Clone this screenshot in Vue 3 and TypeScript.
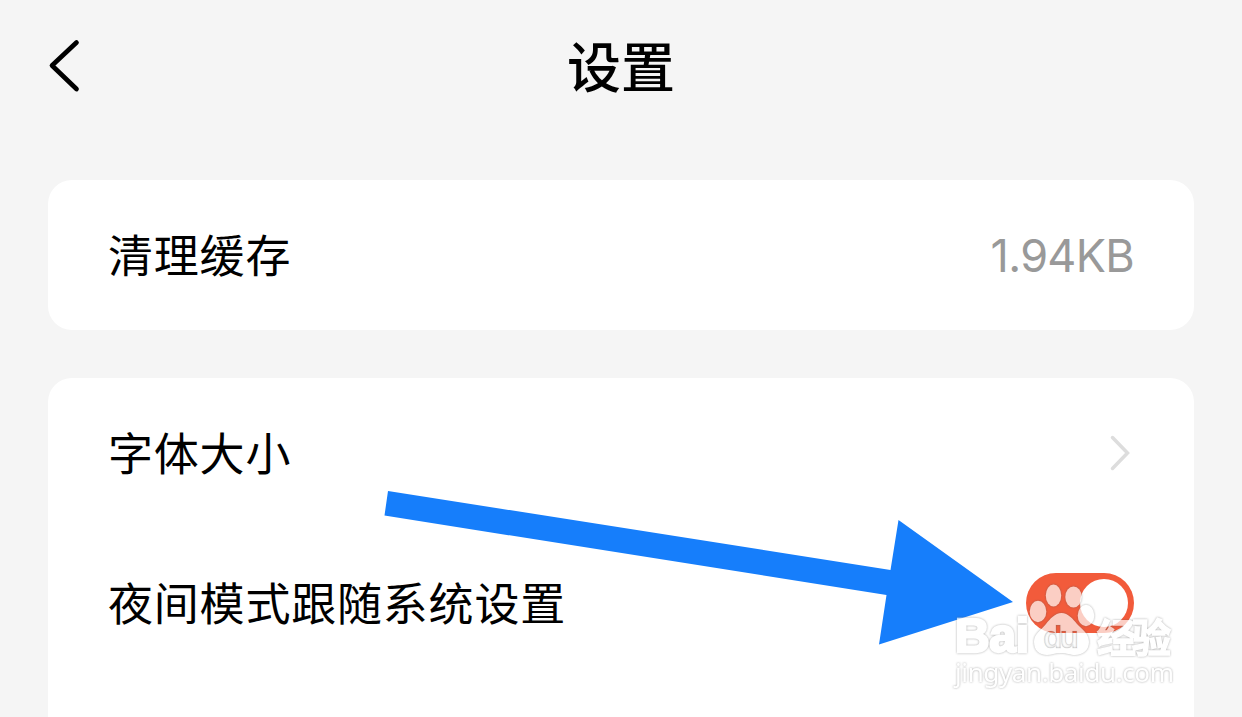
<template>
  <div class="settings-page">
    <header class="nav-bar">
      <button type="button" class="back-button" aria-label="返回">
        <svg width="36" height="56" viewBox="0 0 36 56">
          <path d="M29.5 4.5 5 27.500 29.500 51" />
        </svg>
      </button>
      <h1>设置</h1>
    </header>

    <main class="groups">
      <section class="group">
        <div class="row">
          <span class="label">清理缓存</span>
          <span class="value">{{ cacheSize }}</span>
        </div>
      </section>

      <section class="group group-tall">
        <div class="row">
          <span class="label">字体大小</span>
          <svg class="chevron" width="24" height="40" viewBox="0 0 24 40">
            <path d="M2.5 4.500 17.500 20 2.500 35.500" />
          </svg>
        </div>
        <div class="row">
          <span class="label">夜间模式跟随系统设置</span>
          <button
            type="button"
            role="switch"
            class="switch"
            :class="{ 'switch-on': followSystem }"
            :aria-checked="followSystem"
            @click="followSystem = !followSystem"
          >
            <span class="knob"></span>
          </button>
        </div>
      </section>
    </main>

    <svg class="overlay" width="1242" height="717" viewBox="0 0 1242 717" aria-hidden="true">
      <defs>
        <mask id="paw-cutout" maskUnits="userSpaceOnUse" x="1020" y="600" width="90" height="70">
          <rect x="1020" y="600" width="90" height="70" fill="white" />
          <use href="#paw-du" fill="black" />
        </mask>
      </defs>
      <polygon
        class="pointer"
        points="388,491 890.5,570 898.5,520 1013,602 879,644.5 886.5,595 384.5,515.5"
      />
      <g class="mark">
        <ellipse cx="1038" cy="611.5" rx="8.3" ry="10.7" />
        <ellipse cx="1053.5" cy="595.5" rx="7.7" ry="11" />
        <ellipse cx="1073.5" cy="597" rx="8.2" ry="10.5" />
        <ellipse cx="1086" cy="615.5" rx="8.3" ry="10.7" />
        <path
          mask="url(#paw-cutout)"
          d="M1061.500 613C1068 613 1073 619 1077 624C1083 630 1089 634 1089 642C1089 650 1083 655 1075 655C1070 655 1067 653 1061 653C1055 653 1051 655 1047 655C1039 655 1034 650 1034 642C1034 634 1040 631 1046 624C1050 619 1055 613 1061.500 613Z"
        />
        <text class="mark-latin" x="955" y="652" textLength="74">Bai</text>
        <text class="mark-han" x="1097" y="651.500" textLength="74">经验</text>
        <text class="mark-url" x="955" y="682" textLength="219">jingyan.baidu.com</text>
      </g>
      <g class="mark-du">
        <text id="paw-du" class="paw-text" x="1043" y="647.500" textLength="36">du</text>
      </g>
    </svg>
  </div>
</template>

<script setup lang="ts">
import { ref } from "vue";

const cacheSize = ref("1.94KB");
const followSystem = ref(true);
</script>

<style scoped>
.settings-page {
  position: relative;
  height: 717px;
  overflow: hidden;
  background: #f5f5f5;
  color: #000000;
  font-family: Inter, "Noto Sans CJK SC", sans-serif;
}

.nav-bar {
  display: grid;
  grid-template-columns: 100px 1fr 100px;
  align-items: center;
  height: 132px;
}

.back-button {
  display: flex;
  margin-left: 47px;
  padding: 0 0 1px;
  width: 36px;
  border: 0;
  background: none;
  cursor: pointer;
}

.back-button path {
  fill: none;
  stroke: #000000;
  stroke-width: 4.7;
  stroke-linecap: round;
  stroke-linejoin: round;
}

h1 {
  margin: 0;
  padding-top: 5px;
  text-align: center;
  font-size: 54px;
  font-weight: 500;
  line-height: 80px;
}

.groups {
  display: flex;
  flex-direction: column;
  gap: 48px;
  padding: 48px 48px 0;
}

.group {
  border-radius: 24px;
  background: #ffffff;
}

.group-tall {
  height: 400px;
}

.row {
  display: flex;
  align-items: center;
  justify-content: space-between;
  height: 150px;
  padding: 0 60px;
}

.label {
  padding-top: 4px;
  font-size: 45px;
  letter-spacing: 0.8px;
  line-height: 66px;
}

.value {
  color: #999999;
  font-size: 45px;
  letter-spacing: -0.7px;
}

.chevron path {
  fill: none;
  stroke: #dddddd;
  stroke-width: 3.5;
  stroke-linecap: round;
}

.switch {
  display: flex;
  width: 108px;
  height: 60px;
  padding: 6px;
  border: 0;
  border-radius: 30px;
  background: #dddddd;
  cursor: pointer;
}

.switch-on {
  justify-content: flex-end;
  background: #f25b3b;
}

.knob {
  width: 48px;
  height: 48px;
  border-radius: 50%;
  background: #ffffff;
}

.overlay {
  position: absolute;
  top: 0;
  left: 0;
  pointer-events: none;
}

.pointer {
  fill: #167efb;
}

.mark {
  fill: #ffffff;
  opacity: 0.7;
  filter: drop-shadow(0 0 1px rgba(90, 90, 90, 0.7));
}

.mark-latin {
  stroke: #ffffff;
  stroke-width: 2.5;
  font: bold 48px "Liberation Sans", sans-serif;
}

.mark-han {
  stroke: #ffffff;
  stroke-width: 1.5;
  font: bold 39px "Noto Sans CJK SC", sans-serif;
}

.mark-url {
  font: 26px "Noto Sans", sans-serif;
}

.mark-du {
  fill: transparent;
  stroke: rgba(130, 130, 130, 0.15);
}

.paw-text {
  font: bold 32px "Liberation Sans", sans-serif;
}
</style>

<style>
body {
  margin: 0;
}
</style>
